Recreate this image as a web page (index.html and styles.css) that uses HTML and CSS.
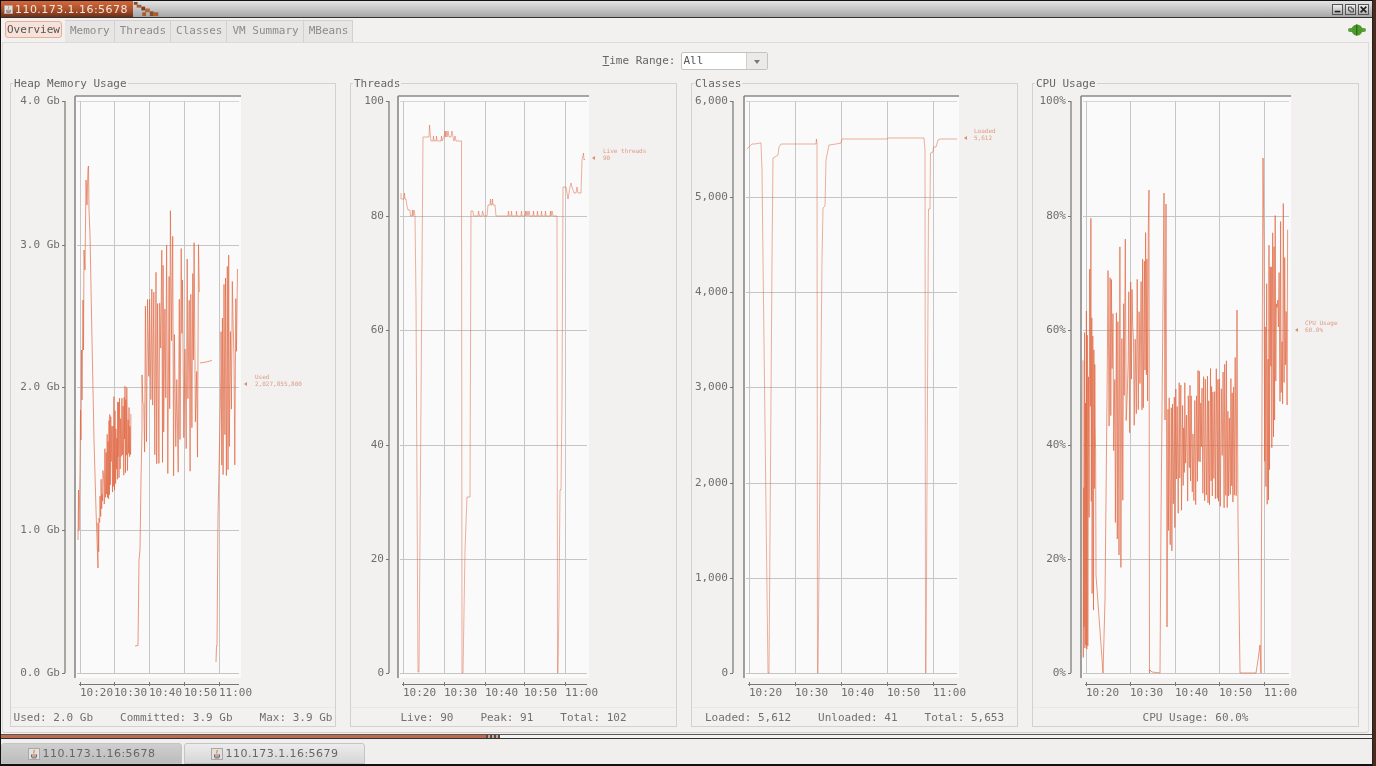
FILE: index.html
```html
<!DOCTYPE html>
<html lang="en">
<head>
    <meta charset="UTF-8">
    <title>110.173.1.16:5678 - Overview</title>
    <link rel="stylesheet" href="styles.css">
</head>
<body>
    <div class="window">
        <!-- Title bar -->
        <header class="titlebar">
            <div class="title-active">
                <svg class="java-icon" viewBox="0 0 12 12"><rect x="0.5" y="0.5" width="11" height="11" fill="#e4e0da" stroke="#a8a8a8"/><path d="M6 2c1 1-1 2 0 3.5M4 7h4.5M3.5 10h5" stroke="#c96a3a" fill="none"/><path d="M3.5 6.5v2.5h5v-2.5" stroke="#4a6fa5" fill="none"/></svg>
                <span>110.173.1.16:5678</span>
            </div>
            <svg class="title-decor" viewBox="0 0 28 17">
                <rect x="0" y="1" width="4" height="3" fill="#8a4a2a"/>
                <rect x="3" y="4" width="5" height="3" fill="#a85a30"/>
                <rect x="8" y="6" width="4" height="4" fill="#7c4023"/>
                <rect x="12" y="8" width="5" height="4" fill="#b5673a"/>
                <rect x="17" y="11" width="4" height="5" fill="#8a4a2a"/>
                <rect x="21" y="12" width="5" height="4" fill="#a85a30"/>
                <rect x="9" y="12" width="4" height="4" fill="#a85a30"/>
            </svg>
            <div class="window-buttons">
                <button class="win-btn"><svg viewBox="0 0 11 11"><rect x="2" y="7" width="7" height="2" fill="#222"/></svg></button>
                <button class="win-btn"><svg viewBox="0 0 11 11"><path d="M3 2.5h4v2h2v4h-4v-2h-2z" fill="none" stroke="#222"/></svg></button>
                <button class="win-btn"><svg viewBox="0 0 11 11"><path d="M2 2l7 7M9 2l-7 7" stroke="#222" stroke-width="2"/></svg></button>
            </div>
        </header>

        <!-- Tabs -->
        <nav class="tabs">
            <a class="tab tab-selected">Overview</a>
            <a class="tab">Memory</a>
            <a class="tab">Threads</a>
            <a class="tab">Classes</a>
            <a class="tab">VM Summary</a>
            <a class="tab">MBeans</a>
            <svg class="conn-icon" viewBox="0 0 18 12">
                <rect x="0" y="4" width="18" height="4" rx="2" fill="#5f9e3c"/>
                <ellipse cx="9" cy="6" rx="5.5" ry="5.5" fill="#4f9a2c"/>
                <rect x="8" y="0.5" width="1.4" height="11" fill="#2f6e1a"/>
            </svg>
        </nav>

        <main class="tab-panel">
            <div class="time-range">
                <label><u>T</u>ime Range:</label>
                <div class="combo">
                    <span class="combo-value">All</span>
                    <span class="combo-arrow"></span>
                </div>
            </div>

            <div class="charts">
                <section class="panel">
                    <h2 class="panel-title">Heap Memory Usage</h2>
                    <svg class="chart" id="heapChart" width="324" height="622"></svg>
                    <div class="panel-footer">
                        <span>Used: 2.0 Gb</span>
                        <span>Committed: 3.9 Gb</span>
                        <span>Max: 3.9 Gb</span>
                    </div>
                </section>
                <section class="panel">
                    <h2 class="panel-title">Threads</h2>
                    <svg class="chart" id="threadsChart" width="325" height="622"></svg>
                    <div class="panel-footer">
                        <span>Live: 90</span>
                        <span>Peak: 91</span>
                        <span>Total: 102</span>
                    </div>
                </section>
                <section class="panel">
                    <h2 class="panel-title">Classes</h2>
                    <svg class="chart" id="classesChart" width="325" height="622"></svg>
                    <div class="panel-footer">
                        <span>Loaded: 5,612</span>
                        <span>Unloaded: 41</span>
                        <span>Total: 5,653</span>
                    </div>
                </section>
                <section class="panel">
                    <h2 class="panel-title">CPU Usage</h2>
                    <svg class="chart" id="cpuChart" width="325" height="622"></svg>
                    <div class="panel-footer">
                        <span>CPU Usage: 60.0%</span>
                    </div>
                </section>
            </div>
        </main>

        <div class="divider">
            <div class="divider-fill"></div>
            <div class="divider-checks"></div>
        </div>

        <!-- Internal frame list -->
        <footer class="taskbar">
            <button class="task task-active">
                <svg class="java-icon" viewBox="0 0 12 12"><rect x="0.5" y="0.5" width="11" height="11" fill="#e4e0da" stroke="#a8a8a8"/><path d="M6 2c1 1-1 2 0 3.5M4 7h4.5M3.5 10h5" stroke="#c96a3a" fill="none"/><path d="M3.5 6.5v2.5h5v-2.5" stroke="#4a6fa5" fill="none"/></svg>
                110.173.1.16:5678
            </button>
            <button class="task">
                <svg class="java-icon" viewBox="0 0 12 12"><rect x="0.5" y="0.5" width="11" height="11" fill="#e4e0da" stroke="#a8a8a8"/><path d="M6 2c1 1-1 2 0 3.5M4 7h4.5M3.5 10h5" stroke="#c96a3a" fill="none"/><path d="M3.5 6.5v2.5h5v-2.5" stroke="#4a6fa5" fill="none"/></svg>
                110.173.1.16:5679
            </button>
        </footer>
    </div>

    <script src="charts.js"></script>
</body>
</html>
```

FILE: styles.css
```css
* {
    box-sizing: border-box;
}

body {
    margin: 0;
    width: 1376px;
    height: 766px;
    overflow: hidden;
    background-color: #4a2a1c;
    font-family: "DejaVu Sans Mono", "Liberation Mono", monospace;
    font-size: 11px;
    color: #666;
}

.window {
    width: 1373px;
    height: 766px;
    display: flex;
    flex-direction: column;
    background-color: #f2f1f0;
    border-left: 1px solid #111;
    border-top: 1px solid #111;
    border-bottom: 2px solid #111;
    border-right: 1px solid #222;
    filter: blur(0.35px); /* the capture is a little soft */
}

/* Title bar */
.titlebar {
    height: 17px;
    flex-shrink: 0;
    display: flex;
    align-items: stretch;
    background: linear-gradient(#e4e4e4, #a6a6a6);
    border-bottom: 1px solid #333;
}

.title-active {
    width: 132px;
    display: flex;
    align-items: center;
    gap: 2px;
    padding-left: 3px;
    background: linear-gradient(#d2683a, #a8502a 55%, #6e3018);
    color: #f4e4dc;
    font-family: "DejaVu Sans", sans-serif;
    letter-spacing: 0.45px;
}

.title-active .java-icon {
    width: 9px;
    height: 11px;
}

.title-decor {
    width: 28px;
    height: 16px;
}

.window-buttons {
    margin-left: auto;
    margin-right: 3px;
    display: flex;
    align-items: center;
    gap: 2px;
}

.win-btn {
    width: 11px;
    height: 11px;
    padding: 0;
    border: 1px solid #555;
    background: linear-gradient(#f0f0f0, #b0b0b0);
}

.win-btn svg {
    display: block;
    width: 9px;
    height: 9px;
}

/* Tabs */
.tabs {
    height: 24px;
    flex-shrink: 0;
    display: flex;
    align-items: stretch;
    padding: 2px 0 0 4px;
}

.tab {
    padding: 2px 4px 0 5px;
    line-height: 16px;
    background-color: #e7e6e4;
    border: 1px solid #d2d1cf;
    border-bottom: none;
    border-left: none;
    color: #8c8c8c;
}

.tab-selected {
    height: 17px;
    margin: 1px 3px 0 0;
    padding: 0 1px;
    line-height: 15px;
    background-color: #f6e2d9;
    border: 1px solid #e4ae98;
    border-radius: 3px;
    color: #555;
}

.conn-icon {
    width: 18px;
    height: 12px;
    margin: 4px 6px 0 auto;
}

/* Main area */
.tab-panel {
    height: 691px;
    flex-shrink: 0;
    margin: 0 3px 0 1px;
    padding: 9px 7px 0;
    border: 1px solid #dcdbd9;
    border-bottom-color: #d8d0cc;
    border-radius: 0 0 3px 3px;
}

.time-range {
    height: 17px;
    display: flex;
    align-items: center;
    justify-content: center;
    gap: 6px;
}

.combo {
    width: 87px;
    height: 18px;
    display: flex;
    background-color: #fff;
    border: 1px solid #c4c3c1;
    border-radius: 2px;
}

.combo-value {
    flex: 1;
    padding-left: 1px;
    line-height: 15px;
    color: #555;
}

.combo-arrow {
    width: 21px;
    background-color: #ebeae8;
    border-left: 1px solid #cfcecc;
    position: relative;
}

.combo-arrow::after {
    content: "";
    position: absolute;
    left: 7px;
    top: 7px;
    border-left: 3px solid transparent;
    border-right: 3px solid transparent;
    border-top: 4px solid #777;
}

.charts {
    display: grid;
    grid-template-columns: 326px repeat(3, 327px);
    column-gap: 14px;
    margin-top: 14px;
}

.panel {
    position: relative;
    height: 644px;
    border: 1px solid #d2d1cf;
    display: flex;
    flex-direction: column;
}

.panel-title {
    position: absolute;
    top: -7px;
    left: 2px;
    margin: 0;
    padding: 0 1px;
    background-color: #f2f1f0;
    font-size: 11px;
    font-weight: normal;
    line-height: 14px;
    color: #666;
}

.chart {
    display: block;
    flex-shrink: 0;
    font-size: 11px;
}

.chart text {
    fill: #6e6e6e;
}

.chart .value-label {
    font-size: 6px;
    fill: #dd9c87;
}

.panel-footer {
    flex: 1;
    margin: 1px 0 0;
    display: flex;
    align-items: center;
    justify-content: center;
    gap: 27px;
    border-top: 1px solid #e8e7e5;
    color: #707070;
}

/* Bottom strip */
.divider {
    height: 5px;
    flex-shrink: 0;
    margin-top: 1px;
    display: flex;
    background-color: #f4f4f3;
    border-top: 1px solid #555;
    border-bottom: 1px solid #333;
}

.divider-fill {
    width: 485px;
    background-color: #bc6a50;
}

.divider-checks {
    width: 14px;
    background: repeating-linear-gradient(90deg, #5a4a40 0 2px, #c8a898 2px 4px);
}

.taskbar {
    flex: 1;
    display: flex;
    align-items: flex-end;
    gap: 2px;
    background-color: #f0efee;
}

.task {
    width: 181px;
    height: 21px;
    display: flex;
    align-items: center;
    justify-content: center;
    gap: 3px;
    padding: 0;
    border: 1px solid #c4c4c4;
    border-radius: 3px 3px 0 0;
    background: linear-gradient(#ececec, #d6d6d6);
    color: #666;
    font-family: "DejaVu Sans", sans-serif;
    font-size: 11px;
    letter-spacing: 0.45px;
}

.task-active {
    background: linear-gradient(#cfcfcf, #bcbcbc);
}

.task .java-icon {
    width: 12px;
    height: 12px;
}
```

FILE: charts.js
```js
// JConsole style overview charts. All coordinates are page pixels, the svg viewBox
// is set from the panel origin so numbers can be read straight off the screen.
const SVG_NS = "http://www.w3.org/2000/svg";
const TOP = 96, GRID_TOP = 101, GRID_BOTTOM = 673, PLOT_BOTTOM = 678, XAXIS = 684;
const TIMES = ["10:20", "10:30", "10:40", "10:50", "11:00"];

let seed = 12345;
function rnd() {
    seed = (seed * 16807) % 2147483647;
    return seed / 2147483647;
}

function el(parent, name, attrs, text) {
    const node = document.createElementNS(SVG_NS, name);
    for (const key in attrs) node.setAttribute(key, attrs[key]);
    if (text !== undefined) node.textContent = text;
    parent.appendChild(node);
    return node;
}

function line(svg, x1, y1, x2, y2, color, width) {
    el(svg, "line", { x1, y1, x2, y2, stroke: color, "stroke-width": width || 1 });
}

// linear lookup in a [[x, y], ...] table
function lerp(table, x) {
    for (let i = 1; i < table.length; i++) {
        if (x <= table[i][0]) {
            const a = table[i - 1], b = table[i];
            return a[1] + (b[1] - a[1]) * (x - a[0]) / (b[0] - a[0]);
        }
    }
    return table[table.length - 1][1];
}

// up and down noise between a low and a high envelope
function band(x0, x1, step, low, high, depth) {
    const pts = [];
    let up = true;
    for (let x = x0; x < x1; x += step * (0.6 + rnd() * 0.8)) {
        const lo = lerp(low, x), hi = lerp(high, x);
        const r = rnd() * rnd() * (depth || 0.7) * (lo - hi);
        pts.push([x, up ? hi + r : lo - r]);
        up = !up;
    }
    return pts;
}

function drawChart(cfg) {
    const svg = document.getElementById(cfg.id);
    svg.setAttribute("viewBox", cfg.originX + " 84 " + svg.getAttribute("width") + " 622");

    // plot background and frame
    el(svg, "rect", { x: cfg.frame, y: TOP, width: cfg.right - cfg.frame, height: PLOT_BOTTOM - TOP, fill: "#fafafa" });
    line(svg, cfg.frame, TOP, cfg.right, TOP, "#8a8a8a", 1.5);
    line(svg, cfg.frame, TOP, cfg.frame, PLOT_BOTTOM, "#808080", 1.5);

    // y axis and horizontal grid
    line(svg, cfg.axis, GRID_TOP, cfg.axis, GRID_BOTTOM, "#8c8c8c", 1.5);
    cfg.yLabels.forEach((label, i) => {
        const y = cfg.yTicks[i];
        line(svg, cfg.frame + 2, y + 0.5, cfg.right - 2, y + 0.5, i === 0 ? "#d6d6d6" : "#c6c5c3");
        line(svg, cfg.axis - 3, y + 0.5, cfg.axis, y + 0.5, "#777");
        el(svg, "text", { x: cfg.axis - 5, y: y + 3, "text-anchor": "end" }, label);
    });

    // x axis and vertical grid
    line(svg, cfg.vticks[0] - 1, XAXIS + 0.5, cfg.right - 2, XAXIS + 0.5, "#777");
    cfg.vticks.forEach((x, i) => {
        line(svg, x + 0.5, GRID_TOP, x + 0.5, GRID_BOTTOM, "#c6c6c6");
        line(svg, x + 0.5, XAXIS - 2, x + 0.5, XAXIS + 2, "#777");
        el(svg, "text", { x: x, y: 696 }, TIMES[i]);
    });

    // series
    cfg.series.forEach(pts => {
        el(svg, "polyline", {
            points: pts.map(p => p[0].toFixed(1) + "," + p[1].toFixed(1)).join(" "),
            fill: "none",
            stroke: "#e0643e",
            "stroke-opacity": cfg.opacity,
            "stroke-width": 1
        });
    });

    // current value marker
    const m = cfg.marker;
    el(svg, "path", { d: `M${m.x + 3} ${m.y - 2}L${m.x} ${m.y}L${m.x + 3} ${m.y + 2}z`, fill: "#dd8a70" });
    el(svg, "text", { class: "value-label", x: m.textX, y: m.y - 5 }, m.name);
    el(svg, "text", { class: "value-label", x: m.textX, y: m.y + 2 }, m.value);
}

drawChart({
    id: "heapChart", originX: 11, axis: 65, frame: 75, right: 241, opacity: 0.66,
    yLabels: ["4.0 Gb", "3.0 Gb", "2.0 Gb", "1.0 Gb", "0.0 Gb"],
    yTicks: [101, 245, 387, 530, 673],
    vticks: [80, 114, 149, 184, 219],
    marker: { x: 244, y: 384, textX: 255, name: "Used", value: "2,027,855,800" },
    series: [
        [[78, 540], [78.5, 490], [79, 530], [80, 470], [80.5, 410], [81, 440], [81.5, 350], [82, 400],
         [83, 300], [83.5, 350], [84, 250], [85, 270], [86, 180], [87, 205], [88, 168], [88.5, 166], [89, 210],
         [90, 235], [92, 340], [94, 440], [96, 510], [98, 568]].concat(
            band(98, 131, 0.5,
                [[98, 568], [100, 520], [105, 505], [112, 498], [118, 480], [130, 470]],
                [[98, 520], [102, 465], [106, 440], [110, 410], [114, 392], [120, 385], [130, 386]])),
        [[135, 646], [138, 645.5], [139, 560], [140, 550], [141, 480], [142, 430]].concat(
            band(142, 200, 1,
                [[142, 470], [150, 465], [160, 470], [175, 478], [190, 480], [200, 470]],
                [[142, 350], [146, 290], [150, 300], [158, 242], [165, 225], [170, 207], [177, 205], [185, 232], [200, 238]], 0.9)),
        [[200, 363], [206, 362], [212, 360.5]],
        [[216, 662], [216.5, 646], [217, 646], [218, 516], [219, 470], [220, 420], [221, 370]].concat(
            band(221, 238, 0.8,
                [[221, 480], [238, 470]],
                [[221, 320], [225, 260], [229, 235], [238, 240]], 0.8))
    ]
});

drawChart({
    id: "threadsChart", originX: 351, axis: 389, frame: 398, right: 589, opacity: 0.5,
    yLabels: ["100", "80", "60", "40", "20", "0"],
    yTicks: [101, 216, 330, 445, 559, 673],
    vticks: [403, 444, 485, 524, 565],
    marker: { x: 592, y: 158, textX: 603, name: "Live threads", value: "90" },
    series: [[
        [401, 193], [401, 199], [404, 199], [404.5, 193], [405, 199], [406, 199], [407, 206], [408, 210], [410, 210],
        [410.5, 216], [412, 216], [412.5, 210], [413, 216], [414, 210], [415, 216], [416, 300], [418, 672], [419, 672],
        [421, 400], [423, 137], [429, 137], [429.5, 125], [430.5, 137], [431, 141], [433, 141], [433.5, 136], [434, 141],
        [436, 141], [436.5, 136], [437, 141], [441, 141], [441.5, 136], [442, 141], [444, 137], [445, 131], [445.5, 137],
        [446, 131], [447, 137], [448, 131], [449, 137], [451, 137], [452, 131], [453, 137], [454, 141], [455, 136], [456, 141],
        [461.5, 141], [462, 673], [463, 673], [465, 550], [467, 497], [470, 497], [471, 211], [473, 211], [473.5, 216],
        [478, 216], [478.5, 211], [479.5, 216], [482, 216], [482.5, 211], [484, 216], [487, 216], [488, 205], [490, 205],
        [490.5, 199], [491, 205], [492, 205], [492.5, 199], [493, 205], [495, 205], [496, 216],
        [508, 216], [508.5, 211], [509, 216], [511, 216], [511.5, 211], [512, 216], [516, 216], [516.5, 211], [517, 216],
        [521, 216], [521.5, 211], [522, 216], [525, 216], [525.5, 211], [526, 216], [527, 211], [528, 216], [529, 211], [530, 216],
        [533, 216], [533.5, 211], [534, 216], [537, 216], [537.5, 211], [538, 216], [541, 216], [541.5, 211], [542, 216],
        [545, 216], [545.5, 211], [546, 216], [550, 216], [550.5, 211], [551, 216], [552, 211], [553, 216], [557, 216],
        [557.5, 673], [558, 673], [559, 600], [560, 490], [561, 490], [562, 400], [563, 187], [566, 187], [568, 199],
        [570, 187], [571, 183], [572, 187], [574, 193], [575, 193], [576, 193], [577, 187], [578, 193], [581, 193],
        [582, 160], [583.5, 153], [584, 160], [585, 159]
    ]]
});

drawChart({
    id: "classesChart", originX: 692, axis: 733, frame: 744, right: 959, opacity: 0.5,
    yLabels: ["6,000", "5,000", "4,000", "3,000", "2,000", "1,000", "0"],
    yTicks: [101, 197, 292, 387, 483, 578, 673],
    vticks: [749, 795, 841, 887, 933],
    marker: { x: 964, y: 138, textX: 974, name: "Loaded", value: "5,612" },
    series: [[
        [747, 149], [749, 147], [750, 146], [752, 144], [755, 144], [760, 143], [761, 143], [762, 170], [763, 260],
        [768, 673], [769, 673], [772, 260], [773, 158], [775, 157], [778, 155], [779, 147], [781, 144], [816, 144],
        [816.5, 139], [817, 144], [817.5, 673], [818, 673], [822, 260], [823, 208], [825, 206], [826, 160], [829, 145],
        [836, 144], [841, 143], [842, 139], [887, 139], [888, 138], [924, 138], [925, 150], [925.5, 673], [926, 673],
        [928, 300], [928.5, 209], [930, 209], [930.5, 153], [933, 152], [933.5, 147], [936, 147], [938, 140], [940, 139], [957, 139]
    ]]
});

const cpuLeft = band(1083, 1096, 0.5,
    [[1083, 660], [1090, 650], [1096, 590]],
    [[1083, 330], [1085, 306], [1088, 315], [1091, 173], [1092, 280], [1096, 350]], 0.8);

drawChart({
    id: "cpuChart", originX: 1033, axis: 1071, frame: 1081, right: 1291, opacity: 0.66,
    yLabels: ["100%", "80%", "60%", "40%", "20%", "0%"],
    yTicks: [101, 216, 330, 445, 559, 673],
    vticks: [1086, 1130, 1175, 1219, 1264],
    marker: { x: 1295, y: 330, textX: 1305, name: "CPU Usage", value: "60.0%" },
    series: [
        cpuLeft.concat(
            [[1103, 673], [1105, 600], [1107, 400], [1108, 280]],
            band(1108, 1149, 0.8,
                [[1108, 520], [1114, 540], [1118, 600], [1125, 530], [1130, 430], [1140, 420], [1149, 400]],
                [[1108, 270], [1113, 270], [1118, 260], [1122, 218], [1126, 222], [1130, 270], [1137, 280], [1145, 240], [1149, 190]], 0.75),
            [[1149, 190], [1149.5, 673], [1150, 670], [1152, 672], [1160, 673], [1161, 520], [1164, 193], [1165, 420],
             [1166, 204], [1167, 627]],
            band(1168, 1237, 0.8,
                [[1168, 560], [1172, 560], [1176, 520], [1185, 505], [1200, 505], [1215, 505], [1225, 510], [1237, 500]],
                [[1168, 395], [1175, 390], [1180, 380], [1190, 385], [1200, 360], [1215, 370], [1228, 355], [1237, 355]], 0.55),
            [[1237, 310], [1238, 520], [1240, 673], [1256, 673], [1258, 660], [1260, 645], [1261, 673], [1262, 400], [1263, 158]],
            band(1264, 1288, 0.65,
                [[1264, 440], [1266, 540], [1270, 480], [1275, 420], [1285, 400], [1288, 465]],
                [[1264, 220], [1270, 240], [1275, 215], [1280, 225], [1283, 192], [1288, 230]], 0.7)
        )
    ]
});
```
